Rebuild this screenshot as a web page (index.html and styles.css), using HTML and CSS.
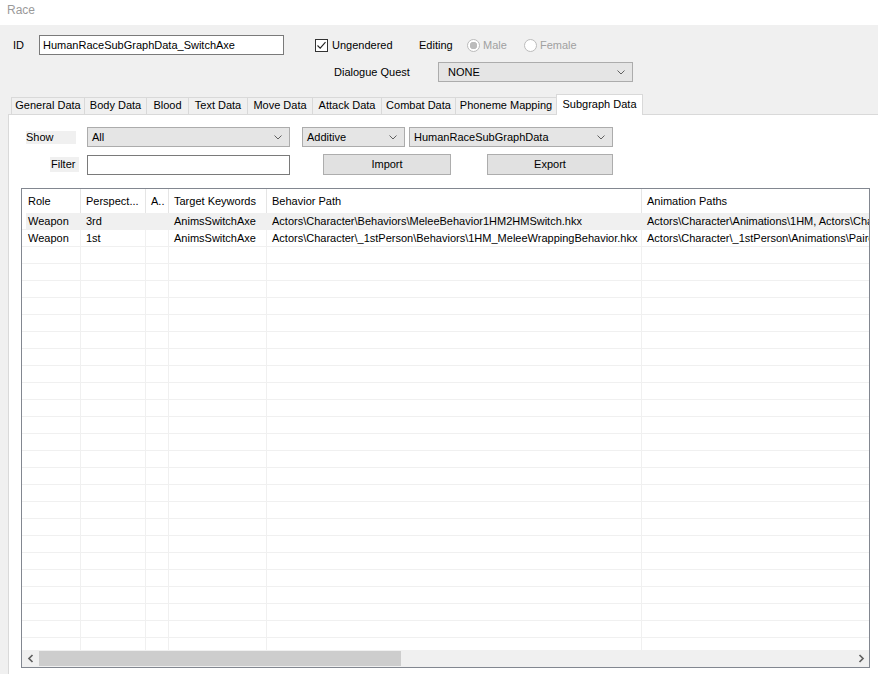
FILE: index.html
```html
<!DOCTYPE html>
<html lang="en">
<head>
    <meta charset="UTF-8">
    <title>Race</title>
    <link rel="stylesheet" href="styles.css">
</head>
<body>
    <div class="titlebar">Race</div>

    <div class="header-form">
        <div class="form-row">
            <span class="id-label">ID</span>
            <div class="textbox id-box">HumanRaceSubGraphData_SwitchAxe</div>
            <label class="check">
                <span class="checkbox">
                    <svg width="11" height="11" viewBox="0 0 11 11"><path d="M1.5 5.5 L4.2 8.2 L9.5 2.2" fill="none" stroke="#222" stroke-width="1.1"/></svg>
                </span>
                Ungendered
            </label>
            <span class="editing">Editing</span>
            <label class="radio radio-male"><span class="radio-dot checked"></span>Male</label>
            <label class="radio"><span class="radio-dot"></span>Female</label>
        </div>
        <div class="form-row">
            <span class="quest-label">Dialogue Quest</span>
            <div class="combo quest-box">
                <span>NONE</span>
                <svg class="chevron" width="8" height="5" viewBox="0 0 8 5"><path d="M0.5 0.5 L4 4 L7.5 0.5" fill="none" stroke="#606060"/></svg>
            </div>
        </div>
    </div>

    <div class="tab-control">
        <div class="tab-strip">
            <div class="tab">General Data</div>
            <div class="tab">Body Data</div>
            <div class="tab">Blood</div>
            <div class="tab">Text Data</div>
            <div class="tab">Move Data</div>
            <div class="tab">Attack Data</div>
            <div class="tab">Combat Data</div>
            <div class="tab">Phoneme Mapping</div>
            <div class="tab active">Subgraph Data</div>
        </div>

        <div class="tab-page">
            <div class="filter-row">
                <span class="caption caption-show">Show</span>
                <div class="combo show-box">
                    <span>All</span>
                    <svg class="chevron" width="8" height="5" viewBox="0 0 8 5"><path d="M0.5 0.5 L4 4 L7.5 0.5" fill="none" stroke="#606060"/></svg>
                </div>
                <div class="combo mode-box">
                    <span>Additive</span>
                    <svg class="chevron" width="8" height="5" viewBox="0 0 8 5"><path d="M0.5 0.5 L4 4 L7.5 0.5" fill="none" stroke="#606060"/></svg>
                </div>
                <div class="combo graph-box">
                    <span>HumanRaceSubGraphData</span>
                    <svg class="chevron" width="8" height="5" viewBox="0 0 8 5"><path d="M0.5 0.5 L4 4 L7.5 0.5" fill="none" stroke="#606060"/></svg>
                </div>
            </div>
            <div class="filter-row second">
                <span class="caption caption-filter">Filter</span>
                <div class="textbox filter-box"></div>
                <div class="button import-btn">Import</div>
                <div class="button export-btn">Export</div>
            </div>

            <div class="listview">
                <div class="list-body">
                    <table class="grid">
                        <thead>
                            <tr>
                                <th class="c-role">Role</th>
                                <th class="c-persp">Perspect...</th>
                                <th class="c-a">A..</th>
                                <th class="c-target">Target Keywords</th>
                                <th class="c-behavior">Behavior Path</th>
                                <th class="c-anim">Animation Paths</th>
                            </tr>
                        </thead>
                        <tbody>
                            <tr class="selected">
                                <td>Weapon</td>
                                <td>3rd</td>
                                <td></td>
                                <td>AnimsSwitchAxe</td>
                                <td>Actors\Character\Behaviors\MeleeBehavior1HM2HMSwitch.hkx</td>
                                <td>Actors\Character\Animations\1HM, Actors\Character\Animations\2HM</td>
                            </tr>
                            <tr>
                                <td>Weapon</td>
                                <td>1st</td>
                                <td></td>
                                <td>AnimsSwitchAxe</td>
                                <td>Actors\Character\_1stPerson\Behaviors\1HM_MeleeWrappingBehavior.hkx</td>
                                <td>Actors\Character\_1stPerson\Animations\PairedAnims\1HM</td>
                            </tr>
                            <tr><td></td><td></td><td></td><td></td><td></td><td></td></tr>
                            <tr><td></td><td></td><td></td><td></td><td></td><td></td></tr>
                            <tr><td></td><td></td><td></td><td></td><td></td><td></td></tr>
                            <tr><td></td><td></td><td></td><td></td><td></td><td></td></tr>
                            <tr><td></td><td></td><td></td><td></td><td></td><td></td></tr>
                            <tr><td></td><td></td><td></td><td></td><td></td><td></td></tr>
                            <tr><td></td><td></td><td></td><td></td><td></td><td></td></tr>
                            <tr><td></td><td></td><td></td><td></td><td></td><td></td></tr>
                            <tr><td></td><td></td><td></td><td></td><td></td><td></td></tr>
                            <tr><td></td><td></td><td></td><td></td><td></td><td></td></tr>
                            <tr><td></td><td></td><td></td><td></td><td></td><td></td></tr>
                            <tr><td></td><td></td><td></td><td></td><td></td><td></td></tr>
                            <tr><td></td><td></td><td></td><td></td><td></td><td></td></tr>
                            <tr><td></td><td></td><td></td><td></td><td></td><td></td></tr>
                            <tr><td></td><td></td><td></td><td></td><td></td><td></td></tr>
                            <tr><td></td><td></td><td></td><td></td><td></td><td></td></tr>
                            <tr><td></td><td></td><td></td><td></td><td></td><td></td></tr>
                            <tr><td></td><td></td><td></td><td></td><td></td><td></td></tr>
                            <tr><td></td><td></td><td></td><td></td><td></td><td></td></tr>
                            <tr><td></td><td></td><td></td><td></td><td></td><td></td></tr>
                            <tr><td></td><td></td><td></td><td></td><td></td><td></td></tr>
                            <tr><td></td><td></td><td></td><td></td><td></td><td></td></tr>
                            <tr><td></td><td></td><td></td><td></td><td></td><td></td></tr>
                            <tr><td></td><td></td><td></td><td></td><td></td><td></td></tr>
                        </tbody>
                    </table>
                </div>
                <div class="hscroll">
                    <div class="sb-btn">
                        <svg width="8" height="9" viewBox="0 0 8 9"><path d="M5.5 1 L2 4.5 L5.5 8" fill="none" stroke="#606060" stroke-width="1.7"/></svg>
                    </div>
                    <div class="sb-track"><div class="sb-thumb"></div></div>
                    <div class="sb-btn">
                        <svg width="8" height="9" viewBox="0 0 8 9"><path d="M2.5 1 L6 4.5 L2.5 8" fill="none" stroke="#606060" stroke-width="1.7"/></svg>
                    </div>
                </div>
            </div>
        </div>
    </div>
</body>
</html>
```

FILE: styles.css
```css
* {
    margin: 0;
    padding: 0;
    box-sizing: border-box;
}

body {
    font-family: 'Liberation Sans', Arial, sans-serif;
    font-size: 11px;
    color: #000;
    background: #f0f0f0;
    width: 878px;
    height: 674px;
    overflow: hidden;
}

.titlebar {
    height: 25px;
    background: #fff;
    color: #9a9a9a;
    font-size: 12px;
    line-height: 15px;
    padding: 3px 0 0 7px;
}

/* top form */

.header-form {
    padding-top: 10px;
}

.form-row {
    display: flex;
    align-items: center;
    height: 20px;
}

.form-row + .form-row {
    margin-top: 7px;
}

.id-label {
    width: 39px;
    padding-left: 13px;
}

.textbox {
    height: 20px;
    border: 1px solid #7a7a7a;
    background: #fff;
    padding: 0 3px;
    line-height: 18px;
    white-space: nowrap;
}

.id-box {
    width: 245px;
}

.check {
    display: flex;
    align-items: center;
    gap: 4px;
    width: 104px;
    margin-left: 31px;
}

.checkbox {
    display: flex;
    width: 13px;
    height: 13px;
    border: 1px solid #333;
    background: #fff;
}

.editing {
    width: 48px;
}

.radio {
    display: flex;
    align-items: center;
    gap: 3px;
    color: #a0a0a0;
}

.radio-male {
    width: 57px;
}

.radio-dot {
    width: 13px;
    height: 13px;
    border: 1px solid #bcbcbc;
    border-radius: 50%;
    background: #fff;
}

.radio-dot.checked {
    background: radial-gradient(circle, #bcbcbc 0 3.5px, #fff 4px);
}

.quest-label {
    margin-left: 334px;
    width: 104px;
}

.combo {
    display: flex;
    align-items: center;
    height: 20px;
    background: #e5e5e5;
    border: 1px solid #acacac;
    padding-left: 4px;
    white-space: nowrap;
}

.chevron {
    margin-left: auto;
    margin-right: 7px;
}

.quest-box {
    width: 195px;
    padding-left: 9px;
}

/* tabs */

.tab-control {
    margin: 12px 0 0 8px;
}

.tab-strip {
    display: flex;
    align-items: flex-end;
    height: 20px;
    padding-left: 3px;
}

.tab {
    height: 17px;
    border: 1px solid #d9d9d9;
    border-bottom: 0;
    background: #f0f0f0;
    text-align: center;
    line-height: 15px;
    margin-left: -1px;
    white-space: nowrap;
}

.tab:first-child { margin-left: 0; width: 74px; }
.tab:nth-child(2) { width: 63px; }
.tab:nth-child(3) { width: 43px; }
.tab:nth-child(4) { width: 60px; }
.tab:nth-child(5) { width: 66px; }
.tab:nth-child(6) { width: 70px; }
.tab:nth-child(7) { width: 75px; }
.tab:nth-child(8) { width: 102px; }

.tab.active {
    position: relative;
    z-index: 1;
    width: 87px;
    height: 21px;
    margin-bottom: -1px;
    background: #fff;
    line-height: 18px;
}

.tab-page {
    width: 870px;
    height: 560px;
    border: 1px solid #d9d9d9;
    border-right: 0;
    border-bottom: 0;
    background: #fff;
    padding-top: 12px;
}

.filter-row {
    display: flex;
    align-items: center;
    height: 20px;
}

.filter-row.second {
    height: 21px;
    margin-top: 7px;
}

.caption {
    background: #f0f0f0;
    white-space: nowrap;
}

.caption-show {
    width: 50px;
    height: 13px;
    line-height: 13px;
    margin-left: 17px;
}

.caption-filter {
    width: 29px;
    height: 15px;
    line-height: 15px;
    padding-left: 1px;
    margin-left: 41px;
}

.show-box {
    width: 203px;
    margin-left: 11px;
}

.mode-box {
    width: 103px;
    margin-left: 12px;
}

.graph-box {
    width: 204px;
    margin-left: 4px;
}

.filter-box {
    width: 203px;
    margin-left: 8px;
}

.button {
    height: 21px;
    background: #e1e1e1;
    border: 1px solid #adadad;
    text-align: center;
    line-height: 19px;
}

.import-btn {
    width: 128px;
    margin-left: 33px;
}

.export-btn {
    width: 126px;
    margin-left: 36px;
}

/* list view */

.listview {
    width: 849px;
    height: 480px;
    margin: 13px 0 0 12px;
    border: 1px solid #828790;
    background: #fff;
    overflow: hidden;
}

.list-body {
    height: 461px;
    overflow: hidden;
}

.grid {
    width: 1935px;
    table-layout: fixed;
    border-collapse: separate;
    border-spacing: 0;
}

.grid th {
    font-weight: normal;
    text-align: left;
    height: 24px;
    line-height: 24px;
    padding-left: 5px;
    border-right: 1px solid #e5e5e5;
    white-space: nowrap;
    overflow: hidden;
}

.grid td {
    height: 17px;
    line-height: 16px;
    padding-left: 5px;
    border-right: 1px solid #f0f0f0;
    border-bottom: 1px solid #f0f0f0;
    white-space: nowrap;
    overflow: hidden;
}

.grid th:first-child,
.grid td:first-child {
    padding-left: 6px;
}

.c-role { width: 59px; }
.c-persp { width: 65px; }
.c-a { width: 23px; }
.c-target { width: 98px; }
.c-behavior { width: 375px; }

.grid tr.selected td {
    background: #f0f0f0;
}

.grid tr.selected td:first-child {
    background: linear-gradient(90deg, #fff 4px, #f0f0f0 4px);
}

.hscroll {
    display: flex;
    height: 17px;
    background: #f0f0f0;
}

.sb-btn {
    width: 17px;
    display: flex;
    align-items: center;
    justify-content: center;
}

.sb-track {
    flex: 1;
    padding: 1px 0;
}

.sb-thumb {
    width: 362px;
    height: 15px;
    background: #cdcdcd;
}
```
